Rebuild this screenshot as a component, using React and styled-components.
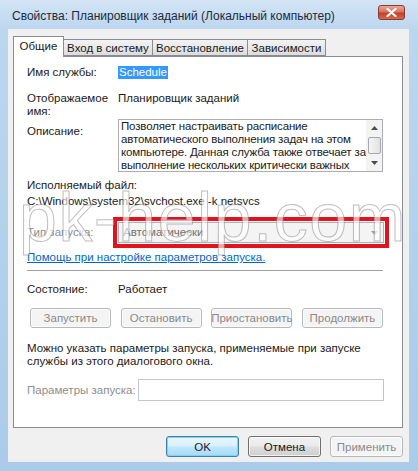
import React from 'react';
import styled, { createGlobalStyle } from 'styled-components';

const GlobalStyle = createGlobalStyle`
  html, body {
    margin: 0;
    padding: 0;
  }
  body {
    width: 418px;
    height: 471px;
    overflow: hidden;
    font-family: "Liberation Sans", Arial, sans-serif;
    font-size: 11.5px;
    color: #1a1a1a;
  }
`;

const Window = styled.div`
  position: relative;
  width: 418px;
  height: 471px;
  box-sizing: border-box;
  display: flex;
  flex-direction: column;
  background: linear-gradient(180deg, #d3e5f6 0px, #bcd6ef 30px, #aacbe9 100%);
`;

const TitleBar = styled.div`
  height: 29px;
  display: flex;
  align-items: center;
  justify-content: space-between;
  padding: 0 12px 0 12px;
  flex-shrink: 0;
`;

const Title = styled.div`
  font-size: 12px;
  color: #1c2a3a;
  margin-top: 3px;
  white-space: nowrap;
`;

const CloseButton = styled.div`
  width: 27px;
  height: 15px;
  margin-top: -4px;
  margin-right: 1px;
  border: 1px solid #8a3a2c;
  border-radius: 3px;
  box-sizing: border-box;
  background: linear-gradient(180deg, #e9a99b 0%, #d7735f 45%, #c24128 55%, #d56a4f 100%);
  display: flex;
  align-items: center;
  justify-content: center;
`;

const Client = styled.div`
  flex: 1;
  margin: 0 9px 9px 8px;
  background: #f0f0f0;
  padding: 7px 6px 5px 5px;
  display: flex;
  flex-direction: column;
`;

const Tabs = styled.div`
  display: flex;
  align-items: flex-end;
  height: 20px;
  position: relative;
  z-index: 1;
`;

const Tab = styled.div`
  box-sizing: border-box;
  width: ${p => p.$w}px;
  height: ${p => (p.$active ? 21 : 17)}px;
  margin-left: ${p => (p.$first ? 0 : -1)}px;
  margin-bottom: ${p => (p.$active ? -1 : 0)}px;
  border: 1px solid #898c95;
  border-bottom: ${p => (p.$active ? 'none' : '1px solid #898c95')};
  background: ${p =>
    p.$active ? '#ffffff' : 'linear-gradient(180deg, #f3f3f3 0%, #e9e9e9 50%, #dcdcdc 100%)'};
  display: flex;
  align-items: center;
  justify-content: center;
  padding-bottom: ${p => (p.$active ? 3 : 0)}px;
  white-space: nowrap;
  position: relative;
  z-index: ${p => (p.$active ? 2 : 1)};
`;

const Panel = styled.div`
  flex: 1;
  background: #ffffff;
  border: 1px solid #898c95;
  padding: 9px 18px 0 13px;
  display: flex;
  flex-direction: column;
`;

const Row = styled.div`
  display: grid;
  grid-template-columns: ${p => p.$col || 91}px 1fr;
  align-items: ${p => p.$align || 'start'};
  margin-top: ${p => p.$mt || 0}px;
  line-height: 13px;
  color: ${p => (p.$disabled ? '#8d8d8d' : 'inherit')};
`;

const Label = styled.div`
  padding-top: ${p => p.$pt || 0}px;
  white-space: nowrap;
`;

const Selected = styled.span`
  background: #3399ff;
  color: #ffffff;
  padding: 0 1px;
  justify-self: start;
`;

const DescBox = styled.div`
  height: 53px;
  box-sizing: border-box;
  border: 1px solid #abadb3;
  display: flex;
  margin-right: 1px;
  overflow: hidden;
`;

const DescText = styled.div`
  flex: 1;
  padding: 0 1px 0 2px;
  line-height: 13px;
  letter-spacing: -0.15px;
  white-space: nowrap;
  overflow: hidden;
`;

const ScrollBar = styled.div`
  width: 16px;
  display: flex;
  flex-direction: column;
  align-items: center;
  background: #f3f3f3;
  padding: 1px 0;
  box-sizing: border-box;
`;

const Arrow = styled.div`
  height: 15px;
  width: 100%;
  display: flex;
  align-items: center;
  justify-content: center;
`;

const Thumb = styled.div`
  width: 11px;
  height: 16px;
  margin: 2px 0;
  border: 1px solid #a4a7ac;
  border-radius: 2px;
  background: linear-gradient(90deg, #f4f4f4, #e3e3e3);
`;

const Block = styled.div`
  margin-top: ${p => p.$mt || 0}px;
  line-height: 13px;
  color: ${p => (p.$disabled ? '#8d8d8d' : 'inherit')};
`;

const Combo = styled.div`
  height: 21px;
  box-sizing: border-box;
  border: 1px solid #adb2b5;
  background: #f4f4f4;
  color: #707070;
  display: flex;
  align-items: center;
  justify-content: space-between;
  padding: 0 5px 0 4px;
  outline: 4px solid #e3121c;
  outline-offset: 1px;
`;

const Link = styled.a`
  color: #0066cc;
  text-decoration: underline;
  line-height: 13px;
  margin-top: 8px;
  align-self: flex-start;
`;

const Separator = styled.div`
  height: 1px;
  background: #a0a0a0;
  margin: 6px 1px 0 0;
`;

const ButtonRow = styled.div`
  display: grid;
  grid-template-columns: repeat(4, 81px);
  justify-content: space-between;
  margin: 12px 1px 0 3px;
`;

const Button = styled.div`
  height: ${p => p.$h || 21}px;
  box-sizing: border-box;
  border-radius: 3px;
  display: flex;
  align-items: center;
  justify-content: center;
  white-space: nowrap;
  border: 1px solid ${p => (p.$disabled ? '#b6b9bc' : p.$default ? '#3c7fb1' : '#707070')};
  color: ${p => (p.$disabled ? '#8a8a8a' : '#1a1a1a')};
  background: ${p =>
    p.$disabled
      ? '#f4f4f4'
      : p.$default
      ? 'linear-gradient(180deg, #eaf6fd 0%, #d9f0fc 45%, #bee6fd 55%, #a7d9f5 100%)'
      : 'linear-gradient(180deg, #f2f2f2 0%, #ebebeb 45%, #dddddd 55%, #cfcfcf 100%)'};
  box-shadow: ${p => (p.$default ? 'inset 0 0 0 1px #7fd3f5' : 'inset 0 0 0 1px rgba(255,255,255,0.7)')};
`;

const Input = styled.div`
  height: 22px;
  box-sizing: border-box;
  border: 1px solid #c3c6cb;
  background: #ffffff;
`;

const Footer = styled.div`
  display: flex;
  justify-content: flex-end;
  gap: 9px;
  margin-top: 8px;
  & > div {
    width: 73px;
  }
`;

const Watermark = styled.div`
  position: absolute;
  left: 19px;
  top: 183px;
  font-family: "Liberation Sans", Arial, sans-serif;
  font-size: 68px;
  letter-spacing: 1.6px;
  line-height: 1;
  color: rgba(255, 255, 255, 0.62);
  -webkit-text-stroke: 1px rgba(110, 110, 110, 0.45);
  pointer-events: none;
  z-index: 5;
`;

const tabs = [
  { label: 'Общие', w: 51 },
  { label: 'Вход в систему', w: 90 },
  { label: 'Восстановление', w: 96 },
  { label: 'Зависимости', w: 79 },
];

const Tri = ({ down, color = '#4d4d4d' }) => (
  <svg width="7" height="4" viewBox="0 0 7 4">
    <path d={down ? 'M0 0H7L3.5 4Z' : 'M0 4H7L3.5 0Z'} fill={color} />
  </svg>
);

export default function App() {
  return (
    <Window>
      <GlobalStyle />
      <TitleBar>
        <Title>Свойства: Планировщик заданий (Локальный компьютер)</Title>
        <CloseButton>
          <svg width="11" height="9" viewBox="0 0 11 9">
            <path d="M1.5 1L9.5 8M9.5 1L1.5 8" stroke="#ffffff" strokeWidth="2.2" strokeLinecap="round" />
          </svg>
        </CloseButton>
      </TitleBar>
      <Client>
        <Tabs>
          {tabs.map((t, i) => (
            <Tab key={t.label} $w={t.w} $active={i === 0} $first={i === 0}>
              {t.label}
            </Tab>
          ))}
        </Tabs>
        <Panel>
          <Row>
            <Label>Имя службы:</Label>
            <Selected>Schedule</Selected>
          </Row>
          <Row $mt={13}>
            <Label>
              Отображаемое
              <br />
              имя:
            </Label>
            <div>Планировщик заданий</div>
          </Row>
          <Row $mt={1}>
            <Label $pt={6}>Описание:</Label>
            <DescBox>
              <DescText>
                Позволяет настраивать расписание
                <br />
                автоматического выполнения задач на этом
                <br />
                компьютере. Данная служба также отвечает за
                <br />
                выполнение нескольких критически важных
              </DescText>
              <ScrollBar>
                <Arrow>
                  <Tri />
                </Arrow>
                <Thumb />
                <div style={{ flex: 1 }} />
                <Arrow>
                  <Tri down />
                </Arrow>
              </ScrollBar>
            </DescBox>
          </Row>
          <Block $mt={7}>Исполняемый файл:</Block>
          <Block $mt={3}>C:\Windows\system32\svchost.exe -k netsvcs</Block>
          <Row $mt={14} $align="center" $disabled>
            <Label>Тип запуска:</Label>
            <Combo>
              <span>Автоматически</span>
              <Tri down color="#a0a0a0" />
            </Combo>
          </Row>
          <Link>Помощь при настройке параметров запуска.</Link>
          <Separator />
          <Row $mt={12}>
            <Label>Состояние:</Label>
            <div>Работает</div>
          </Row>
          <ButtonRow>
            <Button $disabled $h={20}>Запустить</Button>
            <Button $disabled $h={20}>Остановить</Button>
            <Button $disabled $h={20}>Приостановить</Button>
            <Button $disabled $h={20}>Продолжить</Button>
          </ButtonRow>
          <Block $mt={14}>
            Можно указать параметры запуска, применяемые при запуске
            <br />
            службы из этого диалогового окна.
          </Block>
          <Row $mt={11} $align="center" $col={111} $disabled>
            <Label>Параметры запуска:</Label>
            <Input />
          </Row>
        </Panel>
        <Footer>
          <Button $default>OK</Button>
          <Button>Отмена</Button>
          <Button $disabled>Применить</Button>
        </Footer>
      </Client>
      <Watermark>pk-help.com</Watermark>
    </Window>
  );
}
